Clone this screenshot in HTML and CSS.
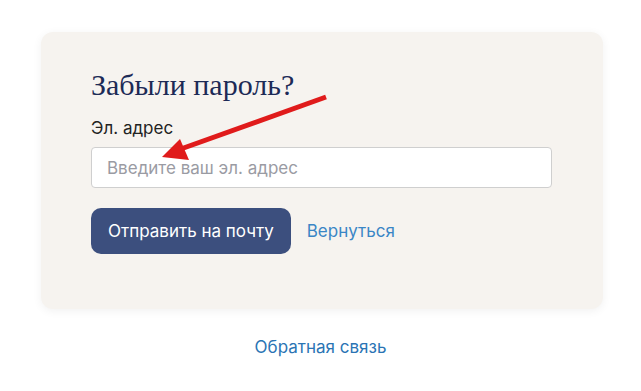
FILE: index.html
```html
<!DOCTYPE html>
<html lang="ru">
<head>
<meta charset="utf-8">
<link rel="stylesheet" href="styles.css">
</head>
<body>
<div class="page">
  <div class="card">
    <h1 class="title">Забыли пароль?</h1>
    <label class="label" for="email">Эл. адрес</label>
    <input class="input" id="email" type="text" placeholder="Введите ваш эл. адрес">
    <div class="actions">
      <button class="btn">Отправить на почту</button>
      <a class="back" href="#">Вернуться</a>
    </div>
    <svg class="arrow" width="641" height="391" viewBox="0 0 641 391">
      <line x1="326" y1="97" x2="178" y2="150" stroke="#e01b1b" stroke-width="5" stroke-linecap="butt"/>
      <polygon points="162,157 180,139 189,160" fill="#e01b1b"/>
    </svg>
  </div>
  <div class="footer"><a class="feedback" href="#">Обратная связь</a></div>
</div>
</body>
</html>
```
FILE: styles.css
```css
html, body {
  margin: 0;
  padding: 0;
  background: #ffffff;
  font-family: Inter, "Noto Sans", sans-serif;
}
.page {
  padding-top: 32px;
}
.card {
  margin-left: 41px;
  width: 562px;
  height: 277px;
  box-sizing: border-box;
  padding: 36px 51px 0 50px;
  background: #f6f3ef;
  border-radius: 12px;
  box-shadow: 0 2px 10px rgba(0, 0, 0, 0.06);
  display: flex;
  flex-direction: column;
}
.title {
  margin: 0;
  font-family: "Liberation Serif", serif;
  font-weight: normal;
  font-size: 30px;
  line-height: 34px;
  color: #1c2a56;
}
.label {
  margin-top: 16px;
  font-size: 17px;
  line-height: 20px;
  color: #222;
}
.input {
  margin-top: 9px;
  height: 41px;
  box-sizing: border-box;
  border: 1px solid #cfcfcf;
  border-radius: 4px;
  background: #fff;
  padding: 0 15px;
  font-family: Inter, sans-serif;
  font-size: 17px;
  color: #333;
  outline: none;
}
.input::placeholder {
  color: #9a9ba3;
}
.actions {
  margin-top: 20px;
  display: flex;
  align-items: center;
  gap: 16px;
}
.btn {
  height: 46px;
  padding: 0 17px;
  border: none;
  border-radius: 10px;
  background: #3c4f7e;
  color: #fff;
  font-family: Inter, sans-serif;
  font-size: 17px;
}
.back {
  color: #3a86c6;
  text-decoration: none;
  font-size: 17px;
}
.arrow {
  position: absolute;
  left: 0;
  top: 0;
  pointer-events: none;
}
.footer {
  text-align: center;
  margin-top: 28px;
}
.feedback {
  color: #2a74b4;
  text-decoration: none;
  font-size: 17px;
  line-height: 20px;
}
```
